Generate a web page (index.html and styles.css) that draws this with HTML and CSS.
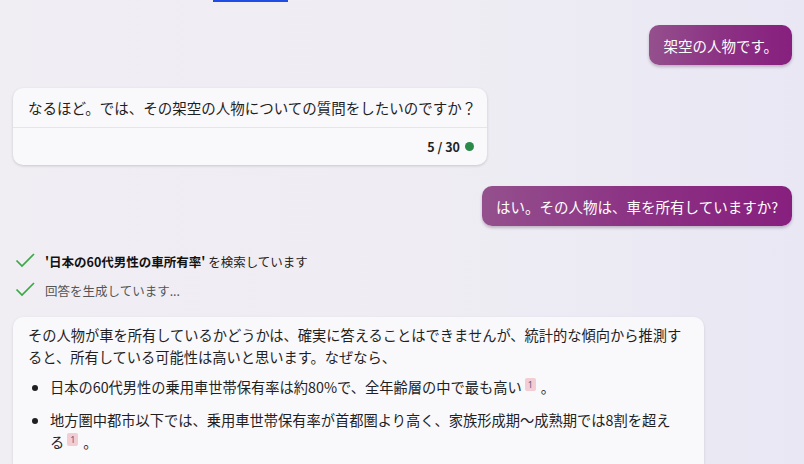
FILE: index.html
```html
<!DOCTYPE html>
<html lang="ja">
<head>
<meta charset="utf-8">
<link rel="stylesheet" href="styles.css">
</head>
<body>
<div class="chat">
  <div class="top-line"></div>
  <div class="user-row first">
    <div class="user-bubble">架空の人物です。</div>
  </div>
  <div class="bot-card">
    <div class="bot-body">なるほど。では、その架空の人物についての質問をしたいのですか？</div>
    <div class="bot-footer"><span class="count">5 / 30</span><span class="dot"></span></div>
  </div>
  <div class="user-row second">
    <div class="user-bubble">はい。その人物は、車を所有していますか?</div>
  </div>
  <div class="status">
    <div class="status-row">
      <svg class="check" width="20" height="16" viewBox="0 0 20 16"><path d="M1.5 7.5 L7 13 L19 1" fill="none" stroke="#3aa845" stroke-width="1.7"/></svg>
      <span class="status-text"><b>'日本の60代男性の車所有率'</b> を検索しています</span>
    </div>
    <div class="status-row">
      <svg class="check" width="20" height="16" viewBox="0 0 20 16"><path d="M1.5 7.5 L7 13 L19 1" fill="none" stroke="#3aa845" stroke-width="1.7"/></svg>
      <span class="status-text muted">回答を生成しています...</span>
    </div>
  </div>
  <div class="answer">
    <p>その人物が車を所有しているかどうかは、確実に答えることはできませんが、統計的な傾向から推測す<br>ると、所有している可能性は高いと思います。なぜなら、</p>
    <ul>
      <li>日本の60代男性の乗用車世帯保有率は約80%で、全年齢層の中で最も高い<sup class="cite">1</sup>。</li>
      <li>地方圏中都市以下では、乗用車世帯保有率が首都圏より高く、家族形成期～成熟期では8割を超え<br>る<sup class="cite">1</sup>。</li>
    </ul>
  </div>
</div>
</body>
</html>
```

FILE: styles.css
```css
html, body {
  margin: 0;
  padding: 0;
}
body {
  width: 804px;
  height: 464px;
  overflow: hidden;
  background: linear-gradient(90deg, #f0eef3 0%, #efedf3 55%, #e8e7f3 100%);
  font-family: "Noto Sans CJK JP", "Noto Sans", sans-serif;
  color: #1f1f1f;
}
.chat {
  display: flex;
  flex-direction: column;
  padding: 0 12px 0 13px;
}
.top-line {
  margin-left: 200px;
  width: 75px;
  height: 2px;
  background: #1f4ce5;
}
.user-row {
  display: flex;
  justify-content: flex-end;
}
.user-row.first { margin-top: 23px; }
.user-row.second { margin-top: 21px; }
.user-bubble {
  height: 40px;
  display: flex;
  align-items: center;
  padding: 0 14px;
  border-radius: 10px;
  background: linear-gradient(90deg, #94508d 0%, #8c3284 50%, #871f7e 100%);
  color: #fff;
  font-size: 14.5px;
  box-shadow: 0 2px 3px rgba(60, 20, 60, 0.25);
}
.bot-card {
  margin-top: 23px;
  width: 474px;
  background: #f9f8fb;
  border-radius: 10px;
  box-shadow: 0 1px 3px rgba(0, 0, 0, 0.16);
}
.bot-body {
  height: 39px;
  display: flex;
  align-items: center;
  padding: 0 14px 0 15px;
  font-size: 14.5px;
  white-space: nowrap;
  border-bottom: 1px solid #e7e5eb;
}
.bot-footer {
  height: 37px;
  display: flex;
  align-items: center;
  justify-content: flex-end;
  padding-right: 13px;
  gap: 5px;
}
.count {
  font-size: 12.5px;
  font-weight: 700;
  color: #222;
}
.dot {
  width: 9px;
  height: 9px;
  border-radius: 50%;
  background: #2b8a4a;
}
.status {
  margin-top: 24px;
  display: flex;
  flex-direction: column;
  gap: 7px;
  padding-left: 2px;
}
.status-row {
  height: 22px;
  display: flex;
  align-items: center;
  gap: 10px;
}
.check { flex: none; }
.status-text {
  font-size: 12.5px;
  color: #222;
}
.status-text b { font-weight: 700; color: #111; }
.status-text.muted { color: #555; }
.answer {
  margin-top: 16px;
  width: 691px;
  box-sizing: border-box;
  padding: 7px 15px 20px 15px;
  background: #f9f8fb;
  border-radius: 10px;
  box-shadow: 0 1px 3px rgba(0, 0, 0, 0.12);
  font-size: 14.25px;
  line-height: 22px;
  white-space: nowrap;
}
.answer p { margin: 0; }
.answer ul {
  margin: 8px 0 0 0;
  padding-left: 22px;
}
.answer li + li { margin-top: 11px; }
.cite {
  display: inline-block;
  vertical-align: top;
  margin: 2px 5px 0 3px;
  width: 11px;
  height: 13px;
  line-height: 13px;
  text-align: center;
  font-size: 9px;
  font-family: "Noto Sans", sans-serif;
  color: #5e5a86;
  background: #f2cdd3;
  border-radius: 2px;
}
```
